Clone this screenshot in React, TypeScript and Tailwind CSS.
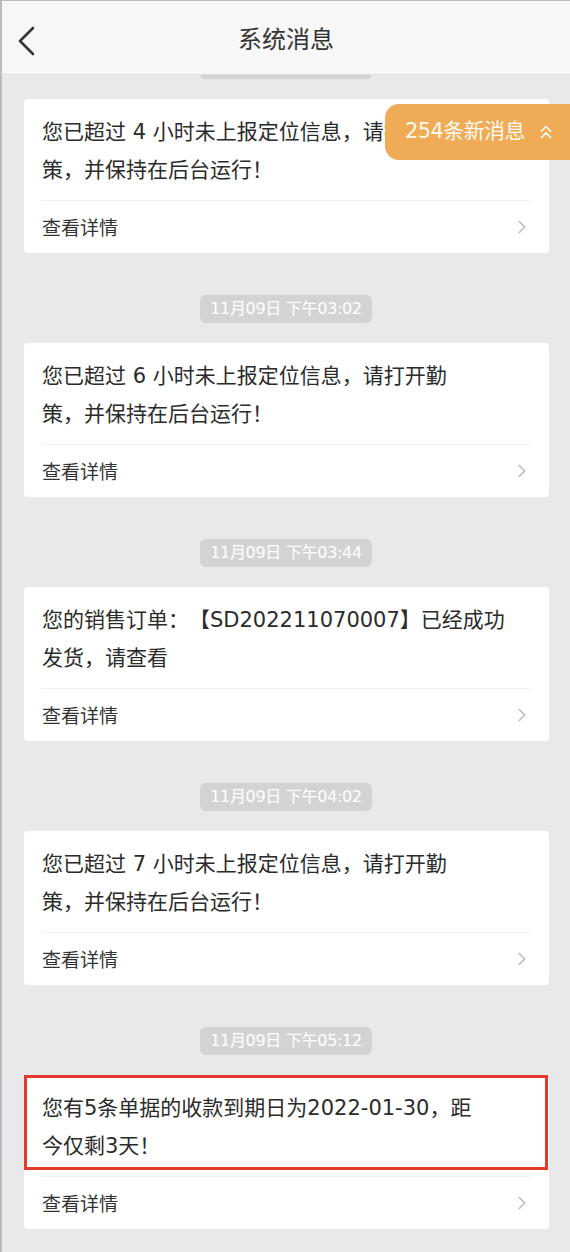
import { ChevronRight, ChevronsUp } from 'lucide-react';

type Message = {
  time?: string;
  lines: string[];
  marked?: boolean;
};

const messages: Message[] = [
  { lines: ['您已超过 4 小时未上报定位信息，请打开勤', '策，并保持在后台运行！'] },
  { time: '11月09日 下午03:02', lines: ['您已超过 6 小时未上报定位信息，请打开勤', '策，并保持在后台运行！'] },
  { time: '11月09日 下午03:44', lines: ['您的销售订单：【SD202211070007】已经成功', '发货，请查看'] },
  { time: '11月09日 下午04:02', lines: ['您已超过 7 小时未上报定位信息，请打开勤', '策，并保持在后台运行！'] },
  { time: '11月09日 下午05:12', lines: ['您有5条单据的收款到期日为2022-01-30，距', '今仅剩3天！'], marked: true },
];

function TimeTag({ time }: { time: string }) {
  return (
    <div className="flex justify-center pt-[42px] pb-[20px]">
      <span className="h-[28px] px-[10px] rounded-[6px] bg-[#d3d3d5] text-white text-[16px] leading-[28px] font-['DejaVu_Sans','Noto_Sans_CJK_SC',sans-serif] tracking-[-0.3px]">
        {time}
      </span>
    </div>
  );
}

function MessageCard({ msg }: { msg: Message }) {
  return (
    <div className="relative ml-[22px] w-[525px] rounded-[4px] bg-white">
      <div className="px-[18px] pt-[14px] pb-[11px] text-[21px] leading-[38px] text-[#2b2b2b] font-['DejaVu_Sans','Noto_Sans_CJK_SC',sans-serif] [text-spacing-trim:space-all]">
        {msg.lines.map((line) => (
          <div key={line} className="whitespace-nowrap">
            {line}
          </div>
        ))}
      </div>
      <div className="mx-[18px] h-px bg-[#f0f0f0]" />
      <div className="flex h-[52px] items-center justify-between pl-[18px] pr-[16px]">
        <span className="text-[19px] text-[#333]">查看详情</span>
        <ChevronRight className="h-[22px] w-[22px] text-[#bdbdbd]" strokeWidth={1.8} />
      </div>
      {/* annotation box */}
      {msg.marked && (
        <div className="absolute left-0 top-0 right-[1px] h-[95px] border-[3px] border-[#e43a2e]" />
      )}
    </div>
  );
}

export default function App() {
  return (
    <div className="relative h-[1252px] w-[570px] overflow-hidden border-l-2 border-t border-[#bcbcbc] bg-[#e9e9eb] font-['Noto_Sans_CJK_SC',sans-serif]">
      {/* Header */}
      <header className="relative flex h-[74px] items-center justify-center border-b border-[#dedede] bg-[#f7f7f7]">
        <svg
          className="absolute left-[14px] top-[24px] h-[32px] w-[22px] text-[#333]"
          viewBox="0 0 22 32"
          fill="none"
          stroke="currentColor"
          strokeWidth={2.6}
          strokeLinecap="round"
          strokeLinejoin="round"
        >
          <path d="M17 3 L4 16 L17 29" />
        </svg>
        <h1 className="text-[24px] text-[#333]">系统消息</h1>
      </header>

      {/* bottom of previous time tag */}
      <div className="mx-auto h-[4px] w-[170px] rounded-b-[4px] bg-[#d3d3d5]" />

      <div className="pt-[20px]">
        {messages.map((msg, i) => (
          <div key={i}>
            {msg.time && <TimeTag time={msg.time} />}
            <MessageCard msg={msg} />
          </div>
        ))}
      </div>

      {/* new messages badge */}
      <div className="absolute right-0 top-[103px] flex h-[56px] w-[185px] items-center gap-[10px] rounded-l-[14px] bg-[#efab55] pl-[20px] text-[21px] text-[#fffaf2] font-['DejaVu_Sans','Noto_Sans_CJK_SC',sans-serif] tracking-[-0.6px]">
        <span>254条新消息</span>
        <ChevronsUp className="h-[22px] w-[22px]" strokeWidth={1.8} />
      </div>
    </div>
  );
}
